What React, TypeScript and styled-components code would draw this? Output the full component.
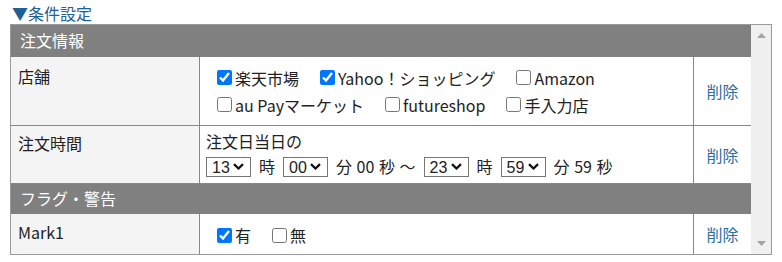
import styled, { createGlobalStyle } from "styled-components";

const GlobalStyle = createGlobalStyle`
  html, body {
    margin: 0;
    padding: 0;
    background: #fff;
  }
  body {
    font-family: "Noto Sans CJK JP", "Noto Sans", sans-serif;
    font-size: 16px;
    color: #222;
  }
`;

const Page = styled.div`
  padding: 4px 10px 0 10px;
`;

const Toggle = styled.div`
  height: 20px;
  line-height: 19px;
  padding-left: 2px;
  color: #1d6195;
  cursor: pointer;
`;

const Frame = styled.div`
  width: 762px;
  height: 231px;
  box-sizing: border-box;
  border: 1px solid #9a9a9a;
  display: flex;
  overflow: hidden;
`;

const Sheet = styled.div`
  width: 740px;
  flex: none;
  display: grid;
  grid-template-columns: 189px 494px 57px;
  grid-template-rows: 32px 69px 58px 30px 41px;
`;

const SectionHead = styled.div`
  grid-column: 1 / -1;
  background: #808080;
  color: #fff;
  display: flex;
  align-items: center;
  padding: 0 0 3px 9px;
  line-height: 20px;
`;

const Label = styled.div<{ $top: number }>`
  box-sizing: border-box;
  background: #f4f4f4;
  border-right: 1px solid #888;
  border-bottom: 1px solid #888;
  padding: ${(p) => p.$top}px 7px 0;
  line-height: 20px;
`;

const Value = styled.div<{ $shift?: number }>`
  box-sizing: border-box;
  border-right: 1px solid #888;
  border-bottom: 1px solid #888;
  padding: ${(p) => p.$shift ?? 0}px 6px 0;
  display: flex;
  flex-direction: column;
  justify-content: center;
  line-height: 20px;
`;

const Action = styled.div`
  box-sizing: border-box;
  border-bottom: 1px solid #888;
  display: flex;
  align-items: center;
  justify-content: center;
`;

const DeleteLink = styled.a`
  color: #2a6e9f;
  text-decoration: none;
  cursor: pointer;
`;

const OptionLine = styled.div`
  display: flex;
  align-items: center;
  height: 27px;
  padding-left: 11px;
`;

const Option = styled.label`
  display: inline-flex;
  align-items: center;
  gap: 3px;
  margin-right: 21px;
  white-space: nowrap;
`;

const Check = styled.input`
  width: 15px;
  height: 15px;
  margin: 0;
  accent-color: #0075ff;
`;

const TimeLine = styled.div`
  display: flex;
  align-items: center;
  gap: 8px;
  height: 25px;
  padding-top: 2px;
  white-space: pre;
  word-spacing: 1px;
`;

const SelectWrap = styled.span`
  position: relative;
  display: inline-block;
  width: 45px;
  height: 20px;
`;

const Select = styled.select`
  appearance: none;
  width: 45px;
  height: 20px;
  box-sizing: border-box;
  border: 1px solid #767676;
  border-radius: 0;
  background: #fff;
  padding: 0 0 0 5px;
  font-family: "Liberation Sans", Arial, sans-serif;
  font-size: 16px;
  color: #222;
  outline: none;
`;

const Chevron = styled.svg`
  position: absolute;
  right: 7px;
  top: 7px;
  pointer-events: none;
`;

const Scrollbar = styled.div`
  flex: 1;
  background: #f0f0f0;
  display: flex;
  flex-direction: column;
  justify-content: space-between;
  align-items: center;
  padding: 8px 0 8px;
`;

const Arrow = styled.svg`
  display: block;
`;

function TimeSelect({ value }: { value: string }) {
  return (
    <SelectWrap>
      <Select defaultValue={value}>
        <option value={value}>{value}</option>
      </Select>
      <Chevron width="11" height="7" viewBox="0 0 11 7">
        <polyline points="1,1.2 5.5,5.5 10,1.2" fill="none" stroke="#111" strokeWidth="2.3" />
      </Chevron>
    </SelectWrap>
  );
}

function Choice({ label, checked }: { label: string; checked?: boolean }) {
  return (
    <Option>
      <Check type="checkbox" defaultChecked={checked} />
      {label}
    </Option>
  );
}

export default function App() {
  return (
    <>
      <GlobalStyle />
      <Page>
        <Toggle>▼条件設定</Toggle>
        <Frame>
          <Sheet>
            <SectionHead>注文情報</SectionHead>

            <Label $top={9}>店舗</Label>
            <Value>
              <OptionLine>
                <Choice label="楽天市場" checked />
                <Choice label="Yahoo！ショッピング" checked />
                <Choice label="Amazon" />
              </OptionLine>
              <OptionLine>
                <Choice label="au Payマーケット" />
                <Choice label="futureshop" />
                <Choice label="手入力店" />
              </OptionLine>
            </Value>
            <Action>
              <DeleteLink>削除</DeleteLink>
            </Action>

            <Label $top={7}>注文時間</Label>
            <Value>
              <div>注文日当日の</div>
              <TimeLine>
                <TimeSelect value="13" />
                <span>時</span>
                <TimeSelect value="00" />
                <span>分 00 秒 ～</span>
                <TimeSelect value="23" />
                <span>時</span>
                <TimeSelect value="59" />
                <span>分 59 秒</span>
              </TimeLine>
            </Value>
            <Action>
              <DeleteLink>削除</DeleteLink>
            </Action>

            <SectionHead>フラグ・警告</SectionHead>

            <Label $top={8}>Mark1</Label>
            <Value $shift={2}>
              <OptionLine>
                <Choice label="有" checked />
                <Choice label="無" />
              </OptionLine>
            </Value>
            <Action>
              <DeleteLink>削除</DeleteLink>
            </Action>
          </Sheet>
          <Scrollbar>
            <Arrow width="9" height="5" viewBox="0 0 9 5">
              <polygon points="0,5 4.5,0 9,5" fill="#a3a3a3" />
            </Arrow>
            <Arrow width="9" height="5" viewBox="0 0 9 5">
              <polygon points="0,0 4.5,5 9,0" fill="#a3a3a3" />
            </Arrow>
          </Scrollbar>
        </Frame>
      </Page>
    </>
  );
}
